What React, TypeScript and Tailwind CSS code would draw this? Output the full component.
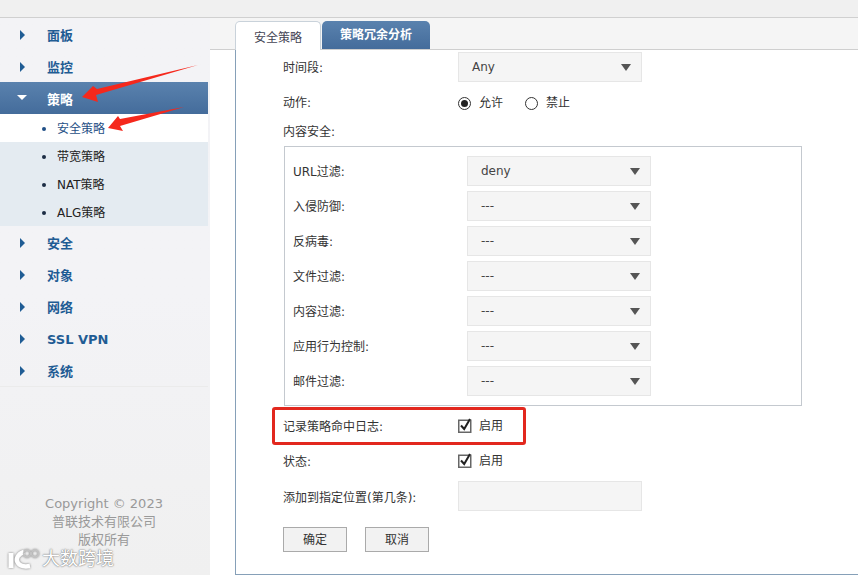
const FONT = "font-['DejaVu_Sans','Noto_Sans_CJK_SC',sans-serif]";

const navTop = ["面板", "监控"];
const navSub = ["带宽策略", "NAT策略", "ALG策略"];
const navBottom = ["安全", "对象", "网络", "SSL VPN", "系统"];
const filters = [
  ["URL过滤:", "deny"],
  ["入侵防御:", "---"],
  ["反病毒:", "---"],
  ["文件过滤:", "---"],
  ["内容过滤:", "---"],
  ["应用行为控制:", "---"],
  ["邮件过滤:", "---"],
];

function NavItem({ label }: { label: string }) {
  return (
    <div className="flex h-8 items-center pl-5 text-[13px] font-bold text-[#1f5c94]">
      <span className="mr-[22px] mt-[2px] h-0 w-0 border-y-[5.5px] border-l-[5px] border-y-transparent border-l-[#1f5c94]" />
      <span className="pt-[4px]">{label}</span>
    </div>
  );
}

function SubItem({ label, active }: { label: string; active?: boolean }) {
  return (
    <div
      className={
        "flex h-7 items-center pl-[42px] pt-[2px] text-xs " +
        (active ? "bg-white text-[#1f4f86]" : "text-[#222]")
      }
    >
      <span className={"mr-[11px] h-1 w-1 rounded-full " + (active ? "bg-[#1f4f86]" : "bg-[#1c2c44]")} />
      {label}
    </div>
  );
}

function Select({ value }: { value: string }) {
  return (
    <div className="flex h-[30px] w-[184px] items-center justify-between border border-[#e6e6e6] bg-[#f5f5f5] pl-[13px] pr-[10px] text-xs text-[#444]">
      <span>{value}</span>
      <span className="h-0 w-0 border-x-[5.5px] border-t-[7px] border-x-transparent border-t-[#555]" />
    </div>
  );
}

function Tick() {
  return (
    <svg className="mr-[7px] -mt-px" width="14" height="15" viewBox="0 0 14 15" fill="none">
      <rect x="0.75" y="2.25" width="12" height="12" fill="#fff" stroke="#666" strokeWidth="1.5" />
      <path d="M3 7.5 L6.2 11 L12 1" stroke="#222" strokeWidth="2" />
    </svg>
  );
}

function Radio({ on }: { on?: boolean }) {
  return (
    <span className="mr-2 flex h-[13px] w-[13px] items-center justify-center rounded-full border-[1.5px] border-[#333] bg-white">
      {on && <span className="h-[7px] w-[7px] rounded-full bg-[#222]" />}
    </span>
  );
}

function Arrows() {
  return (
    <svg className="pointer-events-none absolute left-0 top-0" width="210" height="140" viewBox="0 0 210 140">
      <polygon fill="#f5281c" points="198,65 97,89 93,86 82,97 98,102 96,95" />
      <polygon fill="#f5281c" points="184,107 120,119 118,116 108,128 123,131 120,126" />
    </svg>
  );
}

function Watermark() {
  return (
    <div className="absolute bottom-[5px] left-[8px] flex items-center text-[18px] leading-none text-white [text-shadow:0_0_2px_#777,0_0_1px_#777]">
      <svg width="34" height="22" viewBox="0 0 34 22" fill="none" className="drop-shadow-[0_0_1px_#777]">
        <path d="M3 5v15" strokeWidth="5" stroke="#fff" />
        <path d="M16 4c-6 2-9 7-6 11 2 3 6 4 12 3" strokeWidth="4.5" stroke="#fff" />
        <circle cx="19" cy="5.5" r="3.5" strokeWidth="1.5" stroke="#c4c4c4" />
        <circle cx="27" cy="5.5" r="3.5" strokeWidth="1.5" stroke="#c4c4c4" />
      </svg>
      <span>大数跨境</span>
    </div>
  );
}

export default function App() {
  return (
    <div className={"relative flex h-[575px] w-[858px] flex-col overflow-hidden bg-white " + FONT}>
      <div className="h-[18px] shrink-0 border-b border-[#d0d0d0] bg-[#f0f0f0]" />
      <div className="flex min-h-0 flex-1">
        <aside className="relative flex w-[210px] shrink-0 flex-col bg-gradient-to-b from-[#f3f3f6] via-[#f3f3f6] to-[#f0f0f0]">
          <div className="w-[208px] flex-1">
            <div className="border-b border-[#ebebeb]">
              {navTop.map((n) => (
                <NavItem key={n} label={n} />
              ))}
              <div className="flex h-8 items-center bg-gradient-to-b from-[#5a82ae] to-[#446c9b] pl-[17px] text-[13px] font-bold text-white">
                <span className="mr-5 -mt-[2px] h-0 w-0 border-x-[5px] border-t-[5px] border-x-transparent border-t-white" />
                <span className="pt-[4px]">策略</span>
              </div>
              <SubItem label="安全策略" active />
              <div className="bg-[#e4ebf1]">
                {navSub.map((n) => (
                  <SubItem key={n} label={n} />
                ))}
              </div>
              {navBottom.map((n) => (
                <NavItem key={n} label={n} />
              ))}
            </div>
          </div>
          <div className="h-[88px] pr-[2px] pt-[8px] text-center text-[13px] leading-[18px] text-[#999]">
            <p>Copyright © 2023</p>
            <p>普联技术有限公司</p>
            <p>版权所有</p>
          </div>
          <Watermark />
        </aside>

        <main className="flex min-w-0 flex-1 flex-col">
          <div className="flex h-[32px] shrink-0 items-end border-b border-[#cfcfcf] bg-[#f5f5f5] pl-[25px] text-xs">
            <div className="relative z-10 -mb-px flex h-[29px] w-[86px] items-center justify-center rounded-t-[5px] border border-b-0 border-[#c9d2da] bg-white pt-[3px] text-[#445]">
              安全策略
            </div>
            <div className="ml-px flex h-7 w-[108px] items-center justify-center rounded-t-[5px] bg-gradient-to-b from-[#5a82ae] to-[#446c9b] font-bold text-white">
              策略冗余分析
            </div>
          </div>
          <div className="ml-[25px] flex-1 border-b border-l border-[#86a0b8] bg-white pl-[47px] pt-[2px] text-xs text-[#333]">
            <div className="flex items-center">
              <label className="w-[175px] pt-[2px]">时间段:</label>
              <Select value="Any" />
            </div>
            <div className="mt-[11px] flex h-5 items-center">
              <label className="w-[175px]">动作:</label>
              <Radio on />
              <span className="mr-[22px]">允许</span>
              <Radio />
              <span>禁止</span>
            </div>
            <div className="mt-[9px] h-5 leading-5">内容安全:</div>
            <div className="ml-px mt-[4px] flex w-[518px] flex-col gap-[5px] border border-[#c4c9cf] px-2 py-[9px]">
              {filters.map(([label, value]) => (
                <div key={label} className="flex items-center">
                  <label className="w-[174px] pt-[2px]">{label}</label>
                  <Select value={value} />
                </div>
              ))}
            </div>
            <div className="mt-[10px] flex h-5 items-center">
              <label className="w-[175px] pt-[2px]">记录策略命中日志:</label>
              <Tick />
              <span>启用</span>
            </div>
            <div className="mt-[15px] flex h-5 items-center">
              <label className="w-[175px] pt-[2px]">状态:</label>
              <Tick />
              <span>启用</span>
            </div>
            <div className="mt-[10px] flex items-center">
              <label className="w-[175px] pt-[3px]">添加到指定位置(第几条):</label>
              <div className="h-[30px] w-[184px] border border-[#e6e6e6] bg-[#f5f5f5]" />
            </div>
            <div className="mt-4 flex gap-[18px]">
              <button className="h-[25px] w-16 border border-[#aaa] bg-[#f2f2f2] text-xs text-[#333]">确定</button>
              <button className="h-[25px] w-16 border border-[#aaa] bg-[#f2f2f2] text-xs text-[#333]">取消</button>
            </div>
          </div>
        </main>
      </div>
      <Arrows />
      <div className="pointer-events-none absolute left-[272px] top-[407px] h-[38px] w-[254px] rounded-[3px] border-[3px] border-[#e2281e]" />
    </div>
  );
}
